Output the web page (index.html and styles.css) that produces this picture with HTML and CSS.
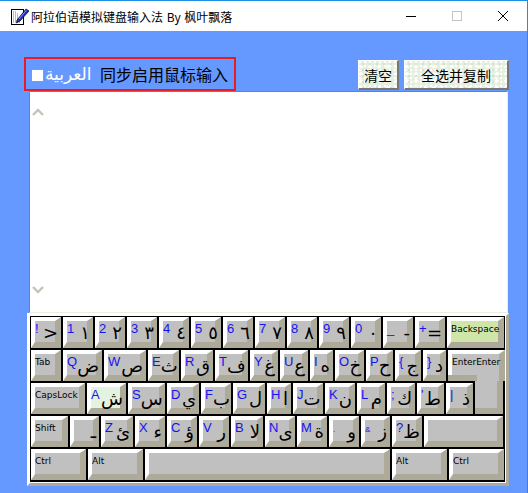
FILE: index.html
```html
<!DOCTYPE html>
<html lang="zh">
<head>
  <meta charset="UTF-8" />
  <title>阿拉伯语模拟键盘输入法 By 枫叶飘落</title>
  <link rel="stylesheet" href="styles.css">
</head>
<body>
  <div class="window">
    <div class="titlebar">
      <svg class="app-icon" width="20" height="20" viewBox="0 0 20 20">
        <rect x="1.5" y="3.5" width="12" height="15" fill="#fff" stroke="#000"/>
        <path d="M3 6h3M3 8h6M3 10h5M3 12h6M3 14h6M3 16h8" stroke="#777" stroke-dasharray="1 1"/>
        <path d="M7 14 L16 3 L19 5 L10 15 L6.5 17 Z" fill="#1c2fc4" stroke="#000" stroke-width="0.7"/>
        <path d="M9 13 L16.5 4" stroke="#7f95ff"/>
      </svg>
      <span class="title">阿拉伯语模拟键盘输入法 By 枫叶飘落</span>
      <div class="win-buttons">
        <svg width="12" height="12" viewBox="0 0 12 12"><path d="M1 6.5h10" stroke="#000"/></svg>
        <svg width="12" height="12" viewBox="0 0 12 12"><rect x="1.5" y="1.5" width="9" height="9" fill="none" stroke="#c4c4c4"/></svg>
        <svg width="12" height="12" viewBox="0 0 12 12"><path d="M1 1l10 10M11 1L1 11" stroke="#000" fill="none"/></svg>
      </div>
    </div>

    <div class="toolbar">
      <label class="sync-box">
        <span class="check"></span>
        <span class="arabic-label">العربية</span>
        <span class="sync-text">同步启用鼠标输入</span>
      </label>
      <div class="actions">
        <button class="tex-btn clear-btn">清空</button>
        <button class="tex-btn copy-btn">全选并复制</button>
      </div>
    </div>

    <div class="editor">
      <div class="scroll">
        <svg width="14" height="10" viewBox="0 0 14 10"><path d="M2 8 L7 3 L12 8" fill="none" stroke="#c4c4b8" stroke-width="2.4"/></svg>
        <svg width="14" height="10" viewBox="0 0 14 10"><path d="M2 2 L7 7 L12 2" fill="none" stroke="#c4c4b8" stroke-width="2.4"/></svg>
      </div>
    </div>

    <div class="keyboard-frame">
      <div class="keyboard">
        <div class="row">
          <div class="key w30"><b>!</b><i>&gt;</i></div>
          <div class="key w30"><b>1</b><i>١</i></div>
          <div class="key w30"><b>2</b><i>٢</i></div>
          <div class="key w30"><b>3</b><i>٣</i></div>
          <div class="key w30"><b>4</b><i>٤</i></div>
          <div class="key w30"><b>5</b><i>٥</i></div>
          <div class="key w30"><b>6</b><i>٦</i></div>
          <div class="key w30"><b>7</b><i>٧</i></div>
          <div class="key w30"><b>8</b><i>٨</i></div>
          <div class="key w30"><b>9</b><i>٩</i></div>
          <div class="key w30"><b>0</b><i>٠</i></div>
          <div class="key w30"><b>_</b><i>-</i></div>
          <div class="key w30"><b>+</b><i>=</i></div>
          <div class="key fn backspace w57"><span>Backspace</span></div>
        </div>
        <div class="row">
          <div class="key fn w30"><span>Tab</span></div>
          <div class="key w39"><b>Q</b><i>ض</i></div>
          <div class="key w42"><b>W</b><i>ص</i></div>
          <div class="key w31"><b>E</b><i>ث</i></div>
          <div class="key w32"><b>R</b><i>ق</i></div>
          <div class="key w33"><b>T</b><i>ف</i></div>
          <div class="key w28"><b>Y</b><i>غ</i></div>
          <div class="key w28"><b>U</b><i>ع</i></div>
          <div class="key w23"><b>I</b><i>ه</i></div>
          <div class="key w29"><b>O</b><i>خ</i></div>
          <div class="key w27"><b>P</b><i>ح</i></div>
          <div class="key w26"><b>{</b><i>ج</i></div>
          <div class="key w23"><b>}</b><i>د</i></div>
          <div class="key fn enter-top w57"><span>EnterEnter</span></div>
        </div>
        <div class="row">
          <div class="key fn w54"><span>CapsLock</span></div>
          <div class="key active w39"><b>A</b><i>ش</i></div>
          <div class="key w37"><b>S</b><i>س</i></div>
          <div class="key w32"><b>D</b><i>ي</i></div>
          <div class="key w30"><b>F</b><i>ب</i></div>
          <div class="key w32"><b>G</b><i>ل</i></div>
          <div class="key w24"><b>H</b><i>ا</i></div>
          <div class="key w30"><b>J</b><i>ت</i></div>
          <div class="key w30"><b>K</b><i>ن</i></div>
          <div class="key w28"><b>L</b><i>م</i></div>
          <div class="key w28"><b>;</b><i>ك</i></div>
          <div class="key w27"><b>'</b><i>ط</i></div>
          <div class="key w27"><b>|</b><i>ذ</i></div>
          <div class="key enter-bottom w28"></div>
        </div>
        <div class="row">
          <div class="key fn w37"><span>Shift</span></div>
          <div class="key w29"><b></b><i>ـ</i></div>
          <div class="key w32"><b>Z</b><i>ئ</i></div>
          <div class="key w30"><b>X</b><i>ء</i></div>
          <div class="key w30"><b>C</b><i>ؤ</i></div>
          <div class="key w30"><b>V</b><i>ر</i></div>
          <div class="key w32"><b>B</b><i>لا</i></div>
          <div class="key w30"><b>N</b><i>ى</i></div>
          <div class="key w30"><b>M</b><i>ة</i></div>
          <div class="key w30"><b class="tiny">.</b><i>و</i></div>
          <div class="key w29"><b class="tiny">&amp;</b><i>ز</i></div>
          <div class="key w30"><b>?</b><i>ظ</i></div>
          <div class="key w79"></div>
        </div>
        <div class="row last">
          <div class="key fn w55"><span>Ctrl</span></div>
          <div class="key fn w55"><span>Alt</span></div>
          <div class="key w245"></div>
          <div class="key fn w55"><span>Alt</span></div>
          <div class="key fn w55"><span>Ctrl</span></div>
        </div>
      </div>
    </div>
  </div>
</body>
</html>
```

FILE: styles.css
```css
html, body {
  margin: 0;
  padding: 0;
}

body {
  font-family: "Liberation Sans", "Noto Sans CJK SC", sans-serif;
  background: #6699ff;
}

.window {
  width: 528px;
  height: 493px;
  box-sizing: border-box;
  border-top: 1px solid #1b8fe6;
  border-right: 1px solid #1b8fe6;
  background: #6699ff;
  overflow: hidden;
}

/* title bar */
.titlebar {
  height: 30px;
  background: #fff;
  display: flex;
  align-items: center;
  padding-left: 10px;
  font-size: 12px;
  color: #000;
}
.app-icon {
  margin-right: 1px;
}
.title {
  font-family: "Noto Sans CJK SC", sans-serif;
  white-space: nowrap;
  word-spacing: 1px;
}
.win-buttons {
  margin-left: auto;
  display: flex;
  gap: 34px;
  padding-right: 18px;
}

/* toolbar */
.toolbar {
  display: flex;
  justify-content: space-between;
  align-items: flex-end;
  margin-top: 26px;
  padding: 0 18px 0 24px;
  height: 34px;
}
.sync-box {
  width: 212px;
  height: 34px;
  box-sizing: border-box;
  border: 2px solid #e81c24;
  display: flex;
  align-items: center;
  padding-left: 5px;
}
.check {
  flex: none;
  width: 11px;
  height: 11px;
  margin-top: 2px;
  background: #fff;
  border: 1px solid #999;
}
.arabic-label {
  font-family: "DejaVu Sans", sans-serif;
  font-size: 17px;
  color: #fff;
  width: 55px;
  margin-left: 1px;
}
.sync-text {
  font-family: "Noto Sans CJK SC", sans-serif;
  font-size: 16px;
  color: #000;
  white-space: nowrap;
}
.actions {
  display: flex;
  gap: 5px;
  margin-bottom: 1px;
}
.tex-btn {
  height: 30px;
  padding: 0;
  font-family: "Noto Sans CJK SC", sans-serif;
  font-size: 14px;
  color: #000;
  border: 1px solid #fff;
  border-right: 2px solid #777;
  border-bottom: 2px solid #777;
  background-color: #e6f0e0;
  background-image:
    radial-gradient(circle at 1px 1px, #fff 1px, transparent 1.6px),
    radial-gradient(circle at 4px 3px, #d4e4cb 1px, transparent 1.6px),
    radial-gradient(circle at 2px 6px, #fff 1.5px, transparent 2px);
  background-size: 5px 4px, 7px 6px, 9px 7px;
}
.clear-btn { width: 41px; }
.copy-btn { width: 105px; }

/* text area */
.editor {
  width: 479px;
  height: 222px;
  box-sizing: border-box;
  margin-left: 29px;
  background: #fff;
  border-top: 1px solid #808080;
  border-left: 1px solid #808080;
  border-right: 1px solid #e6efe0;
  border-bottom: 1px solid #e6efe0;
}
.scroll {
  width: 16px;
  height: 100%;
  box-sizing: border-box;
  padding: 15px 0 17px 1px;
  display: flex;
  flex-direction: column;
  justify-content: space-between;
}

/* keyboard */
.keyboard-frame {
  width: 482px;
  height: 173px;
  box-sizing: border-box;
  margin-left: 27px;
  border-style: solid;
  border-width: 3px;
  border-color: #fff #aeaa9a #aeaa9a #fff;
}
.keyboard {
  width: 476px;
  height: 167px;
  background: #000;
  padding: 1px 0 0 1px;
  box-sizing: border-box;
  border-right: 1px solid #fff;
  border-bottom: 1px solid #fff;
  display: flex;
  flex-direction: column;
  gap: 2px;
}
.row {
  display: flex;
  gap: 2px;
  height: 31px;
}
.key {
  position: relative;
  box-sizing: border-box;
  height: 31px;
  flex: none;
  display: flex;
  justify-content: space-between;
  align-items: flex-start;
  background: #c0c0c0;
  border-style: solid;
  border-width: 4px 6px 6px 4px;
  border-color: #fff #aeaa9a #aeaa9a #fff;
}
.w23 { width: 23px; }
.w24 { width: 24px; }
.w26 { width: 26px; }
.w27 { width: 27px; }
.w28 { width: 28px; }
.w29 { width: 29px; }
.w30 { width: 30px; }
.w31 { width: 31px; }
.w32 { width: 32px; }
.w33 { width: 33px; }
.w37 { width: 37px; }
.w39 { width: 39px; }
.w42 { width: 42px; }
.w54 { width: 54px; }
.w55 { width: 55px; }
.w57 { width: 57px; }
.w79 { width: 79px; }
.w245 { width: 245px; }

.key b {
  font-family: "Liberation Sans", sans-serif;
  font-weight: normal;
  font-size: 13px;
  line-height: 13px;
  color: #1414f0;
  margin-top: 1px;
  flex: none;
}
.key b.tiny {
  font-size: 8px;
  margin-top: 3px;
}
.key i {
  font-family: "DejaVu Sans", sans-serif;
  font-style: normal;
  font-size: 18px;
  line-height: 20px;
  color: #000;
  margin-top: 2px;
  margin-right: -3px;
  flex: none;
}
.key span {
  font-family: "DejaVu Sans", sans-serif;
  font-size: 9px;
  line-height: 12px;
  margin-top: 2px;
  color: #000;
  white-space: nowrap;
}
.backspace {
  background: #cfe6a8;
}
.active {
  background: #e4f2e0;
}

/* L shaped enter key, two boxes that join across the row gap */
.enter-top {
  border-bottom: 0;
}
.enter-top::after {
  content: "";
  position: absolute;
  left: -4px;
  bottom: 0;
  width: 29px;
  height: 6px;
  background: #aeaa9a;
}
.enter-bottom {
  height: 33px;
  margin-top: -2px;
  z-index: 1;
  border-top: 0;
  border-left: 0;
}
```
